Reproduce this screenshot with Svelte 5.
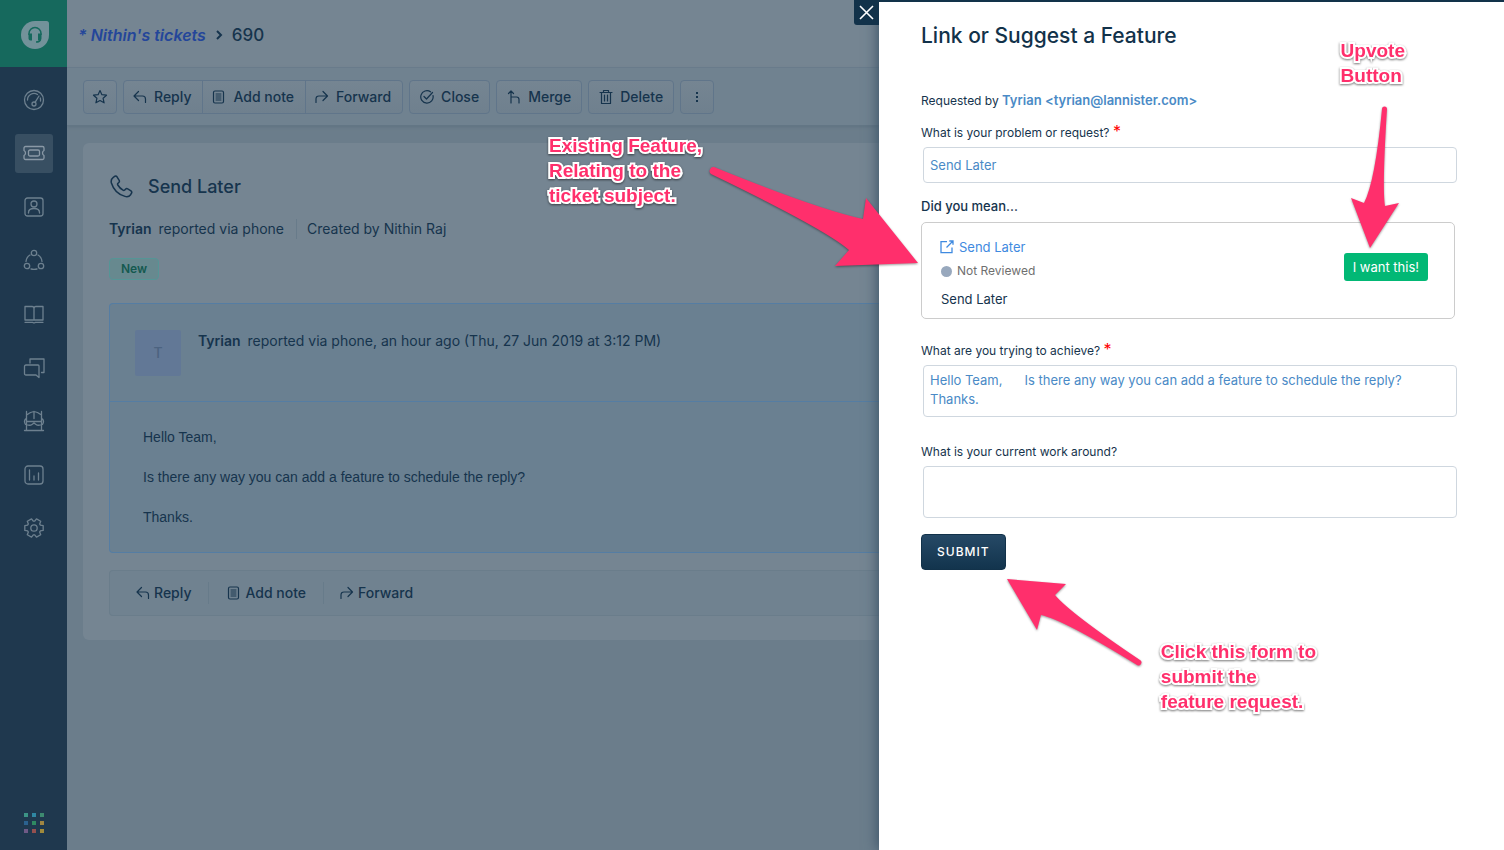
<script>
  let problem = $state('Send Later');
  let goal = $state('Hello Team,      Is there any way you can add a feature to schedule the reply?\nThanks.');
  let workaround = $state('');

  const nav = ['Dashboard', 'Tickets', 'Contacts', 'Social', 'Solutions', 'Forums', 'Arcade', 'Reports', 'Admin'];
  const dots = ['#3c9486', '#2f87a3', '#3d8a70', '#2b628f', '#2f8a62', '#a08542', '#6f5a86', '#94504f', '#a08a3c'];

  // Six-toothed cog: each tooth has two outer and two inner corners.
  const cog = [0, 60, 120, 180, 240, 300]
    .flatMap((a) => [[a - 24, 7], [a - 15, 9.5], [a + 15, 9.5], [a + 24, 7]])
    .map(([a, r]) => {
      const t = (a * Math.PI) / 180;
      return `${(11 + r * Math.cos(t)).toFixed(2)},${(11 + r * Math.sin(t)).toFixed(2)}`;
    })
    .join(' ');
</script>

{#snippet reply()}
  <svg class="ico" width="14" height="14" viewBox="0 0 14 14" aria-hidden="true"><path d="M5.500 1.500 1 6l4.500 4.500M1 6h8.500q3 0 3 3v3.500" /></svg>
{/snippet}
{#snippet note()}
  <svg class="ico" width="14" height="14" viewBox="0 0 14 14" aria-hidden="true"><rect x="1.500" y="1" width="10" height="12" rx="1.500" /><path d="M4 4h5M4 6h5M4 8h5M4 10h5" stroke-width="1" /></svg>
{/snippet}
{#snippet forward()}
  <svg class="ico" width="14" height="14" viewBox="0 0 14 14" aria-hidden="true"><path d="M8 1.500 12.500 6 8 10.500M12.500 6H4Q1 6 1 9v3.500" /></svg>
{/snippet}

<div class="app">
  <aside class="sidebar">
    <a class="logo" href="#home" aria-label="Home">
      <svg width="28" height="28" viewBox="0 0 28 28" aria-hidden="true">
        <path fill="#73929a" d="M14 0h11.500Q28 0 28 2.500V14A14 14 0 1 1 14 0Z" />
        <path fill="none" stroke="#16695d" stroke-width="1.500" d="M8 14v-1.500a6 6 0 0 1 12 0V14M19.500 18.500q-.5 2.500-4.500 2.500" />
        <path fill="#16695d" d="M7.500 12.500h3.500v7H9.500q-2 0-2-2zM20.500 12.500H17v7h1.500q2 0 2-2z" />
      </svg>
    </a>
    <nav>
      {#each nav as item, i}
        <a class="nav-item" class:active={i === 1} href={'#' + item.toLowerCase()} aria-label={item}>
          <svg width="22" height="22" viewBox="0 0 22 22" aria-hidden="true">
            {#if i === 0}
              <circle cx="11" cy="11" r="9.500" /><path d="M4.500 11a6.500 6.500 0 0 1 10-5.500M17.300 9q.4 1 .2 3M12.200 13.200 16 7" /><circle cx="11" cy="15" r="2" />
            {:else if i === 1}
              <path d="M2.500 4.500h17A1.500 1.500 0 0 1 21 6v2.500q-1.500.8-1.500 2.500t1.500 2.500V16a1.500 1.500 0 0 1-1.500 1.500h-17A1.500 1.500 0 0 1 1 16v-2.500Q2.500 12.700 2.500 11T1 8.500V6a1.500 1.500 0 0 1 1.500-1.500Z" /><rect x="5.500" y="8" width="11" height="6" rx="1.500" />
            {:else if i === 2}
              <rect x="2" y="2" width="18" height="18" rx="2.500" /><circle cx="11" cy="8" r="3" /><path d="M5.500 17v-.5q0-4 5.500-4t5.500 4v.5" />
            {:else if i === 3}
              <circle cx="11" cy="4" r="2.700" /><circle cx="4" cy="17" r="2.700" /><circle cx="18" cy="17" r="2.700" /><path d="M7 6Q3.500 8 3 12.500M15 6q3.500 2 4 6.500M8 20q3 .8 6 0" />
            {:else if i === 4}
              <path d="M2 3.500h7q2 0 2 2 0-2 2-2h7V17H2zM11 5.500V17M2 19.300h7.500l1.500.7 1.500-.7H20" />
            {:else if i === 5}
              <path d="M7 6V2h14v13.500h-2.500M3 8h12q1 0 1 1v11.500L13 18H3q-1.500 0-1.500-1.500v-7Q1.500 8 3 8Z" />
            {:else if i === 6}
              <path d="M3.500 1.500V20M18.500 1.500V20M1.500 20.500h19M3.500 5l4-2.500L11 1.500l3.500 1 4 2.500M11 1.500v7M3.500 11.500h15M2.500 9Q.5 11.500 2.500 14.500q4.500 1.500 6.500 0l2-1.500 2 1.500q2 1.500 6.500 0 2-3 0-5.500" />
            {:else if i === 7}
              <rect x="2" y="2" width="18" height="18" rx="3" /><path d="M6.500 6v10M11 12v4M15.500 9v7" />
            {:else}
              <circle cx="11" cy="11" r="3.200" /><polygon points={cog} />
            {/if}
          </svg>
        </a>
      {/each}
    </nav>
    <button class="apps" aria-label="Switch app">
      {#each dots as c}<span style="background:{c}"></span>{/each}
    </button>
  </aside>

  <main>
    <header>
      <a href="#tickets">* Nithin's tickets</a>
      <svg class="chev" width="8" height="10" viewBox="0 0 8 10" aria-hidden="true"><path d="m2 1 4 4-4 4" /></svg>
      <span>690</span>
    </header>

    <div class="toolbar">
      <button class="btn square" aria-label="Watch">
        <svg class="ico" width="16" height="16" viewBox="0 0 16 16" aria-hidden="true"><path d="m8 1.500 1.900 4.200 4.600.5-3.400 3.100 1 4.500L8 11.500l-4.100 2.300 1-4.500L1.500 6.200l4.600-.5z" /></svg>
      </button>
      <div class="group">
        <button class="btn">{@render reply()}Reply</button>
        <button class="btn">{@render note()}Add note</button>
        <button class="btn">{@render forward()}Forward</button>
      </div>
      <button class="btn"><svg class="ico" width="14" height="14" viewBox="0 0 14 14" aria-hidden="true"><path d="M13 5.500A6.200 6.200 0 1 1 10.500 1.800M4 6.500 6.500 9l6-6.500" /></svg>Close</button>
      <button class="btn"><svg class="ico" width="14" height="14" viewBox="0 0 14 14" aria-hidden="true"><path d="M1.500 3.500 4 1l2.500 2.500M4 1v12M4 7h5.500q2.500 0 2.500 2.500V13" /></svg>Merge</button>
      <button class="btn"><svg class="ico" width="14" height="16" viewBox="0 0 14 16" aria-hidden="true"><path d="M1 3.500h12M4.500 3.500v-2h5v2M2.500 3.500v11h9v-11M5.500 6v6M8.500 6v6" /></svg>Delete</button>
      <button class="btn square" aria-label="More"><svg width="4" height="12" viewBox="0 0 4 12" aria-hidden="true"><path fill="#16344d" d="M1 1h2v2H1zM1 5h2v2H1zM1 9h2v2H1z" /></svg></button>
    </div>

    <div class="content">
      <article class="card">
        <h1>
          <svg width="24" height="24" viewBox="0 0 24 24" aria-hidden="true"><path d="M4.300 2.300 6 1.200q1.200-.5 2 .6l2.200 3.500q.6 1.200-.4 2.200l-1 1q-.5.8 0 1.500 2 3.300 5.200 5.200.8.500 1.500 0l1-1q1-1 2.200-.4l3.300 2q1.200.9.600 2.200l-1 1.700q-2 2.800-5.600 1.700Q5.600 18.500 2.400 8 1.500 4.300 4.300 2.300Z" /></svg>
          Send Later
        </h1>
        <p class="meta"><span><strong>Tyrian</strong> reported via phone</span><span class="by">Created by Nithin Raj</span></p>
        <span class="badge">New</span>
        <section class="message">
          <div class="message-head">
            <span class="avatar">T</span>
            <p><strong>Tyrian</strong> reported via phone, an hour ago (Thu, 27 Jun 2019 at 3:12 PM)</p>
          </div>
          <div class="message-body">
            <p>Hello Team,</p>
            <p>Is there any way you can add a feature to schedule the reply?</p>
            <p>Thanks.</p>
          </div>
        </section>
        <div class="actions">
          <button>{@render reply()}Reply</button>
          <button>{@render note()}Add note</button>
          <button>{@render forward()}Forward</button>
        </div>
      </article>
    </div>
  </main>

  <section class="panel" aria-labelledby="panel-title">
    <button class="close" aria-label="Close panel"><svg width="15" height="15" viewBox="0 0 15 15" aria-hidden="true"><path d="m1 1 13 13M14 1 1 14" /></svg></button>
    <h2 id="panel-title">Link or Suggest a Feature</h2>
    <form onsubmit={(e) => e.preventDefault()}>
      <p class="requester">Requested by <a href="mailto:tyrian@lannister.com">Tyrian &lt;tyrian@lannister.com&gt;</a></p>
      <label for="problem">What is your problem or request? <span class="req">*</span></label>
      <input id="problem" type="text" bind:value={problem} />
      <h3>Did you mean...</h3>
      <div class="suggestion">
        <div class="info">
          <a href="#feature"><svg width="14" height="14" viewBox="0 0 14 14" aria-hidden="true"><path d="M7 1.700H1v11h11V7.500M6.500 7.500 13 1M9.300 1H13v3.700" /></svg>Send Later</a>
          <span class="status"><i></i>Not Reviewed</span>
          <span class="desc">Send Later</span>
        </div>
        <button type="button" class="want">I want this!</button>
      </div>
      <label for="goal">What are you trying to achieve? <span class="req">*</span></label>
      <textarea id="goal" rows="2" bind:value={goal}></textarea>
      <label for="workaround" class="last">What is your current work around?</label>
      <textarea id="workaround" rows="2" bind:value={workaround}></textarea>
      <button class="submit">SUBMIT</button>
    </form>
  </section>

  <p class="callout existing">Existing Feature,<br />Relating to the<br />ticket subject.</p>
  <p class="callout upvote">Upvote<br />Button</p>
  <p class="callout click">Click this form to<br />submit the<br />feature request.</p>
  <svg class="arrow to-feature" width="212" height="102" viewBox="0 0 212 102" aria-hidden="true"><path d="M7 1Q110 43 156 53L159 32 211 97 128 100 142 84Q120 64 4 8A4 4 0 0 1 7 1Z" /></svg>
  <svg class="arrow to-upvote" width="50" height="144" viewBox="0 0 50 144" aria-hidden="true"><path d="M32 3a2.500 2.500 0 0 1 5 0Q32 82 35 100L49 97 20 142 1 92 14 97Q25 76 32 3Z" /></svg>
  <svg class="arrow to-submit" width="138" height="88" viewBox="0 0 138 88" aria-hidden="true"><path d="M1 1 60 6 49 17Q64 35 134 82A2.800 2.800 0 0 1 131 87Q58 42 35 37L31 52Z" /></svg>
</div>

<style>
  :global(body) { margin: 0; }
  * { box-sizing: border-box; }
  p, h1, h2, h3 { margin: 0; }
  a { text-decoration: none; }
  button { font: inherit; color: inherit; margin: 0; cursor: pointer; }
  svg { display: block; flex: none; }
  .app {
    position: relative; display: flex; min-height: 100vh; overflow: hidden;
    font-family: Inter, "Liberation Sans", sans-serif; font-size: 14px; line-height: 20px; color: #16344d;
  }
  .sidebar { flex: 0 0 67px; display: flex; flex-direction: column; align-items: center; background: #1f384e; }
  .logo { width: 100%; height: 67px; display: grid; place-items: center; padding: 3px 0 0 2px; background: #16695d; }
  nav { height: 482px; margin-top: 6px; display: grid; grid-auto-rows: 1fr; place-items: center; }
  .nav-item { width: 38px; height: 39px; display: grid; place-items: center; border-radius: 3px; }
  .nav-item.active { background: #384f62; }
  .nav-item svg { fill: none; stroke: #6d808f; stroke-width: 1.300; stroke-linejoin: round; stroke-linecap: round; }
  .nav-item.active svg { stroke: #8a99a6; }
  .apps { margin: auto 0 17px; padding: 0; border: 0; background: none; display: grid; grid-template-columns: repeat(3, 4px); gap: 4px; }
  .apps span { width: 4px; height: 4px; }

  main { flex: 1; min-width: 0; overflow: hidden; background: #6b7d8b; }
  header { height: 68px; padding: 3px 11px 0; display: flex; align-items: center; gap: 9px; font-size: 17px; font-weight: 500; background: #758592; border-bottom: 1px solid #6b7e8d; }
  header a { color: #24469a; font-style: italic; font-size: 16px; font-weight: 600; }
  .chev { fill: none; stroke: #16344d; stroke-width: 2; }
  .toolbar { height: 58px; padding: 1px 16px 0; display: flex; align-items: center; gap: 6px; background: #708290; border-bottom: 1px solid #637685; box-shadow: 0 1px 3px #5f7280; font-weight: 500; }
  .ico { fill: none; stroke: #16344d; stroke-width: 1.200; stroke-linejoin: round; stroke-linecap: round; }
  .btn { height: 34px; flex: none; display: flex; align-items: center; justify-content: center; gap: 7px; padding: 0 10px; border: 1px solid #60758a; border-radius: 4px; background: linear-gradient(#758592, #6f808e); }
  .btn.square { width: 34px; padding: 0; }
  .group { display: flex; }
  .group .btn { border-radius: 0; margin-right: -1px; padding: 0 11px 0 9px; }
  .group .btn:first-child { border-radius: 4px 0 0 4px; }
  .group .btn:last-child { border-radius: 0 4px 4px 0; margin-right: 0; }

  .content { padding: 17px 0 0 16px; }
  .card { padding: 32px 0 24px 26px; background: #758592; border-radius: 6px 0 0 6px; }
  h1 { display: flex; align-items: center; gap: 15px; font-size: 18px; line-height: 24px; font-weight: 500; }
  h1 svg { fill: none; stroke: #16344d; stroke-width: 1.500; stroke-linejoin: round; }
  .meta { display: flex; margin-top: 20px; line-height: 20px; white-space: nowrap; }
  strong { font-weight: 600; margin-right: 3px; }
  .by { margin-left: 12px; padding-left: 10px; border-left: 1px solid #687b8a; }
  .badge { display: block; width: 50px; margin-top: 19px; border: 1px solid #559596; border-radius: 4px; background: #67898f; color: #14594f; font-size: 12px; font-weight: 600; text-align: center; }
  .message { margin-top: 23px; border: 1px solid #557da3; border-right: 0; border-radius: 4px 0 0 4px; background: #6a8091; }
  .message-head { display: flex; gap: 17px; padding: 26px 0 25px 25px; border-bottom: 1px solid #557da3; white-space: nowrap; }
  .message-head p { padding-top: 1px; }
  .avatar { flex: none; width: 46px; height: 46px; display: grid; place-items: center; border-radius: 2px; background: #627896; color: #4c6380; font-weight: 500; }
  .message-body { display: grid; gap: 20px; padding: 25px 33px; font-family: "Liberation Sans", Arial, sans-serif; white-space: nowrap; }
  .actions { margin-top: 17px; height: 46px; padding-left: 8px; display: flex; align-items: center; border: 1px solid #6a7d8b; border-right: 0; border-radius: 4px 0 0 4px; background: #708290; }
  .actions button { display: flex; align-items: center; gap: 4px; height: 22px; padding: 0 17px 0 18px; border: 0; border-right: 1px solid #677b8a; background: none; font-weight: 500; }
  .actions button:last-child { border: 0; padding-left: 16px; }

  .panel { position: relative; flex: 0 0 625px; padding: 21px 47px 40px 42px; border-top: 2px solid #12324a; background: #fff; box-shadow: -2px 0 12px #3f5669; }
  .close { position: absolute; right: 100%; top: -2px; width: 25px; height: 25px; padding: 0; display: grid; place-items: center; border: 0; border-radius: 0 0 0 3px; background: #12324a; }
  .close svg { fill: none; stroke: #fff; stroke-width: 1.600; }
  h2 { font-size: 21px; line-height: 26px; font-weight: 500; color: #12324a; }
  form { display: flex; flex-direction: column; padding-top: 41px; font-size: 13px; }
  .requester, label { font-size: 12px; line-height: 20px; }
  .requester a { color: #4a8ac6; font-size: 13px; font-weight: 600; }
  label { margin-top: 12px; }
  .req { color: #f00; font-size: 16px; line-height: 1; }
  input, textarea { display: block; margin: 4px 0 0 2px; padding: 5px 6px; border: 1px solid #cfd7df; border-radius: 4px; background: #fff; color: #4a8ac6; font: 13px/19px Inter, "Liberation Sans", sans-serif; resize: none; overflow: hidden; }
  input { height: 36px; }
  textarea { height: 52px; }
  h3 { margin-top: 13px; font-size: 13px; line-height: 20px; font-weight: 500; }
  .suggestion { display: flex; align-items: center; justify-content: space-between; margin: 6px 2px 10px 0; padding: 14px 26px 9px 18px; border: 1px solid #ccc; border-radius: 5px; }
  .info { display: grid; line-height: 20px; }
  .info a { display: flex; align-items: center; gap: 5px; color: #3f8ae0; }
  .info a svg { fill: none; stroke: #3f8ae0; stroke-width: 1.300; }
  .status { display: flex; align-items: center; gap: 5px; margin: 4px 0 8px 1px; color: #6f6f6f; font-size: 12px; }
  .status i { width: 11px; height: 11px; border-radius: 50%; background: #98a8bd; }
  .desc { padding-left: 1px; }
  .want { height: 28px; margin-bottom: 12px; padding: 0 9px; border: 0; border-radius: 3px; background: #02b875; color: #fff; }
  .last { margin-top: 25px; }
  .submit { align-self: flex-start; height: 36px; margin-top: 16px; padding: 0 15px; border: 1px solid #12324a; border-radius: 4px; background: linear-gradient(#264966, #12344d); color: #fff; font-size: 12px; font-weight: 500; letter-spacing: 1px; }

  .callout { position: absolute; color: #ff2f6c; font: bold 19px/25px "Liberation Sans", Arial, sans-serif; white-space: nowrap; -webkit-text-stroke: 4px #fff; paint-order: stroke fill; filter: drop-shadow(0 1px 1px #0008); }
  .existing { left: 549px; top: 133px; }
  .upvote { right: 99px; top: 38px; }
  .click { right: 188px; top: 639px; }
  .arrow { position: absolute; overflow: visible; fill: #ff2f6c; filter: drop-shadow(0 1px 1px #0006); }
  .to-feature { left: 707px; top: 166px; }
  .to-upvote { right: 104px; top: 106px; }
  .to-submit { right: 360px; top: 578px; }
</style>
